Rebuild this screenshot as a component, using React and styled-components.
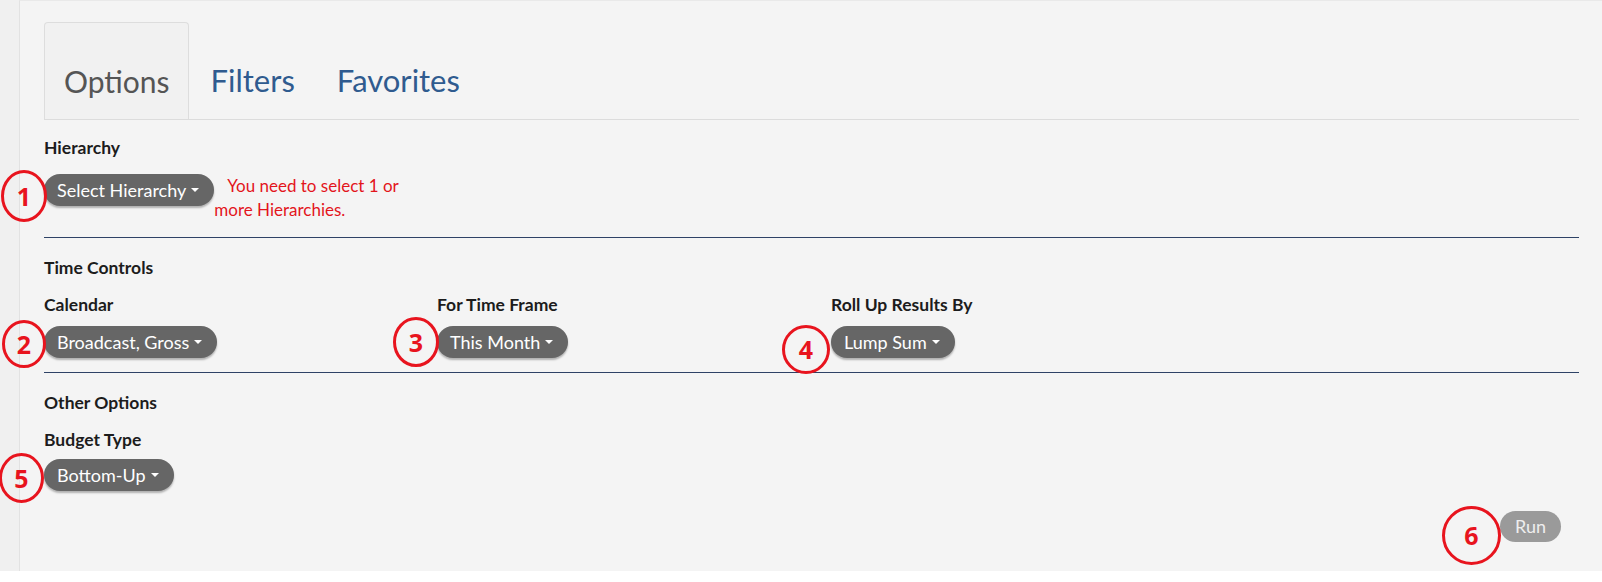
import React from "react";
import styled, { createGlobalStyle } from "styled-components";

const Global = createGlobalStyle`
  html, body { margin: 0; padding: 0; background: #ffffff; }
  body { font-family: "Lato", "Open Sans", sans-serif; }
  * { box-sizing: border-box; }
`;

const Page = styled.div`
  height: 571px;
  background: #f0f0f0;
  padding-left: 19px;
  display: flex;
`;

const Panel = styled.div`
  flex: 1;
  position: relative;
  background: #f4f4f4;
  border-left: 1px solid #e2e2e2;
  border-top: 1px solid #e9e9e9;
  padding: 21px 23px 0 24px;
  display: flex;
  flex-direction: column;
`;

const TabBar = styled.div`
  display: flex;
  border-bottom: 1px solid #dcdcdc;
  height: 98px;
`;

const Tab = styled.div`
  margin-right: 2px;
  padding: ${(p) => (p.$active ? "40px 18px 0 19px" : "39px 19px 0 19px")};
  font-size: ${(p) => (p.$active ? "30px" : "31px")};
  line-height: 36px;
  color: ${(p) => (p.$active ? "#555555" : "#2f5b8f")};
  background: ${(p) => (p.$active ? "#f1f1f1" : "transparent")};
  border: 1px solid ${(p) => (p.$active ? "#dddddd" : "transparent")};
  border-bottom: none;
  border-radius: 4px 4px 0 0;
`;

const Section = styled.div`
  padding: ${(p) => p.$pad || "0"};
  border-bottom: ${(p) => (p.$rule ? "1px solid #2e4266" : "none")};
`;

const Heading = styled.div`
  font-weight: 700;
  font-size: 17.5px;
  line-height: 22px;
  color: #1c1c1c;
  margin-bottom: ${(p) => p.$mb || "0"};
`;

const Columns = styled.div`
  display: grid;
  grid-template-columns: 393px 394px 1fr;
`;

const Field = styled.div`
  display: flex;
  flex-direction: column;
  align-items: flex-start;
`;

const Row = styled.div`
  display: flex;
  align-items: flex-start;
  margin-top: ${(p) => p.$mt || "0"};
`;

const Anchor = styled.div`
  position: relative;
  display: flex;
  margin-top: ${(p) => p.$mt || "0"};
`;

const DropButton = styled.div`
  display: inline-flex;
  align-items: center;
  height: 32px;
  padding: 0 15px 0 13px;
  border-radius: 16px;
  background: #666666;
  color: #ffffff;
  font-size: 18px;
  white-space: nowrap;
  box-shadow: 0 2px 2px rgba(0, 0, 0, 0.28);
`;

const Caret = styled.span`
  display: inline-block;
  width: 0;
  height: 0;
  margin-left: 5px;
  border-top: 4px solid #ffffff;
  border-left: 4px solid transparent;
  border-right: 4px solid transparent;
`;

const ErrorText = styled.div`
  width: 192px;
  text-indent: 13px;
  color: #e3141c;
  font-size: 17px;
  line-height: 24px;
`;

const Footer = styled.div`
  display: flex;
  justify-content: flex-end;
  padding: 20px 18px 0 0;
`;

const RunButton = styled.div`
  height: 31px;
  padding: 0 15px;
  border-radius: 16px;
  background: #9a9a9a;
  color: #eeeeee;
  font-size: 18px;
  line-height: 31px;
`;

const Mark = styled.div`
  position: absolute;
  left: ${(p) => p.$x}px;
  top: ${(p) => p.$y}px;
  width: ${(p) => p.$w}px;
  height: ${(p) => p.$h}px;
  display: flex;
  align-items: center;
  justify-content: center;
  pointer-events: none;
  svg { position: absolute; inset: 0; }
`;

const MarkNum = styled.span`
  position: relative;
  color: #e8141e;
  font-family: "Open Sans", "Liberation Sans", sans-serif;
  font-weight: 700;
  font-size: 25px;
  line-height: 1;
`;

function Annot({ n, x, y, w, h }) {
  return (
    <Mark $x={x} $y={y} $w={w} $h={h}>
      <svg width={w} height={h} viewBox={`0 0 ${w} ${h}`}>
        <ellipse cx={w / 2} cy={h / 2} rx={w / 2 - 1.5} ry={h / 2 - 1.5} fill="none" stroke="#e8141e" strokeWidth="3" />
      </svg>
      <MarkNum>{n}</MarkNum>
    </Mark>
  );
}

function Drop({ label }) {
  return (
    <DropButton>
      {label}
      <Caret />
    </DropButton>
  );
}

export default function App() {
  return (
    <>
      <Global />
      <Page>
        <Panel>
          <TabBar>
            <Tab $active>Options</Tab>
            <Tab>Filters</Tab>
            <Tab>Favorites</Tab>
          </TabBar>

          <Section $rule $pad="17px 0 15px 0">
            <Heading>Hierarchy</Heading>
            <Row $mt="15px">
              <Anchor>
                <Drop label="Select Hierarchy" />
                <Annot n="1" x={-43} y={-4} w={46} h={52} />
              </Anchor>
              <ErrorText>You need to select 1 or more Hierarchies.</ErrorText>
            </Row>
          </Section>

          <Section $rule $pad="19px 0 14px 0">
            <Heading $mb="15px">Time Controls</Heading>
            <Columns>
              <Field>
                <Heading>Calendar</Heading>
                <Anchor $mt="10px">
                  <Drop label="Broadcast, Gross" />
                  <Annot n="2" x={-42} y={-6} w={44} h={48} />
                </Anchor>
              </Field>
              <Field>
                <Heading>For Time Frame</Heading>
                <Anchor $mt="10px">
                  <Drop label="This Month" />
                  <Annot n="3" x={-44} y={-9} w={46} h={50} />
                </Anchor>
              </Field>
              <Field>
                <Heading>Roll Up Results By</Heading>
                <Anchor $mt="10px">
                  <Drop label="Lump Sum" />
                  <Annot n="4" x={-49} y={-1} w={48} h={49} />
                </Anchor>
              </Field>
            </Columns>
          </Section>

          <Section $pad="19px 0 0 0">
            <Heading $mb="15px">Other Options</Heading>
            <Field>
              <Heading>Budget Type</Heading>
              <Anchor $mt="8px">
                <Drop label="Bottom-Up" />
                <Annot n="5" x={-45} y={-6} w={45} h={50} />
              </Anchor>
            </Field>
          </Section>

          <Footer>
            <Anchor>
              <RunButton>Run</RunButton>
              <Annot n="6" x={-58} y={-5} w={59} h={59} />
            </Anchor>
          </Footer>
        </Panel>
      </Page>
    </>
  );
}
